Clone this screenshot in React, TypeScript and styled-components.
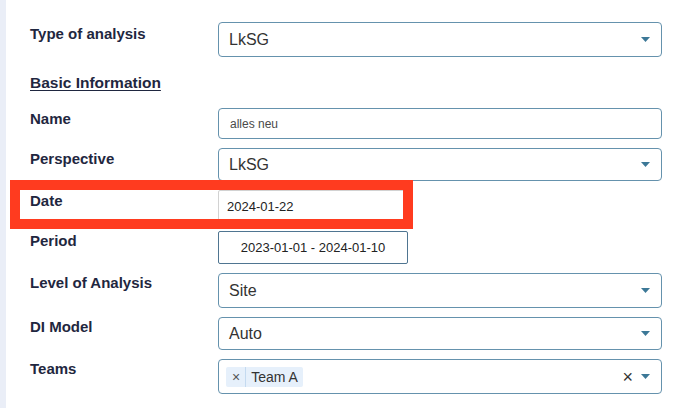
import React from "react";
import styled, { createGlobalStyle } from "styled-components";

const GlobalStyle = createGlobalStyle`
  html, body { margin: 0; padding: 0; background: #ffffff; }
  body { font-family: "Liberation Sans", Arial, Helvetica, sans-serif; }
  * { box-sizing: border-box; }
`;

const Page = styled.div`
  display: flex;
  width: 688px;
  height: 408px;
  overflow: hidden;
  background: #ffffff;
`;

const SideStrip = styled.div`
  width: 6px;
  flex: 0 0 6px;
  background: #eaeef7;
`;

const Form = styled.div`
  display: flex;
  flex-direction: column;
  gap: 9px;
  padding: 22px 0 0 24px;
`;

const Row = styled.div<{ $h: number }>`
  position: relative;
  display: grid;
  grid-template-columns: 188px 444px;
  height: ${(p) => p.$h}px;
`;

const Label = styled.div<{ $top?: number }>`
  padding-top: ${(p) => (p.$top ?? 2)}px;
  font-size: 15px;
  line-height: 18px;
  font-weight: 700;
  color: #1f2740;
`;

const SectionTitle = styled.div`
  margin: 7px 0 6px;
  font-size: 15.5px;
  line-height: 20px;
  font-weight: 700;
  color: #1f2740;
  text-decoration: underline;
  text-underline-offset: 2px;
`;

const SelectBox = styled.div`
  display: flex;
  align-items: center;
  height: 100%;
  padding: 0 11px 0 10px;
  border: 1px solid #6592ad;
  border-radius: 4px;
  font-size: 16px;
  color: #333333;
  background: #fff;
`;

const SelectValue = styled.span`
  flex: 1;
`;

const TextInput = styled.div`
  display: flex;
  align-items: center;
  height: 100%;
  padding: 0 11px;
  border: 1px solid #6592ad;
  border-radius: 4px;
  font-size: 12px;
  color: #4a4a4a;
`;

const DateInput = styled.div`
  display: flex;
  align-items: center;
  width: 190px;
  height: 100%;
  padding: 0 8px;
  border: 1px solid #d2d2d2;
  border-radius: 2px;
  font-size: 13px;
  color: #222;
`;

const PeriodInput = styled.div`
  display: flex;
  align-items: center;
  justify-content: center;
  width: 190px;
  height: 100%;
  border: 1px solid #4f7591;
  border-radius: 2px;
  font-size: 13px;
  color: #222;
`;

const Tag = styled.div`
  display: flex;
  align-items: stretch;
  height: 20px;
  background: #e6f0fb;
  border-radius: 2px;
  font-size: 14px;
  color: #333;
`;

const TagRemove = styled.span`
  display: flex;
  align-items: center;
  padding: 0 5px 0 6px;
  border-right: 1px solid #c4daf0;
  font-size: 14px;
  color: #555;
`;

const TagText = styled.span`
  display: flex;
  align-items: center;
  padding: 0 5px 0 5px;
`;

const TagArea = styled.div`
  flex: 1;
  display: flex;
  margin-left: -3px;
`;

const ClearX = styled.span`
  font-size: 18px;
  color: #333;
  margin-right: 8px;
  line-height: 1;
`;

const Highlight = styled.div`
  position: absolute;
  left: -20px;
  top: -10px;
  width: 403px;
  height: 49px;
  border: 10px solid #ff3b1f;
  pointer-events: none;
`;

const Arrow = () => (
  <svg width="9" height="5" viewBox="0 0 9 5" style={{ display: "block" }}>
    <path d="M0 0 L9 0 L4.5 5 Z" fill="#3c7897" />
  </svg>
);

const Select = ({ value }: { value: string }) => (
  <SelectBox>
    <SelectValue>{value}</SelectValue>
    <Arrow />
  </SelectBox>
);

export default function App() {
  return (
    <>
      <GlobalStyle />
      <Page>
        <SideStrip />
        <Form>
          <Row $h={35}>
            <Label $top={3}>Type of analysis</Label>
            <Select value="LkSG" />
          </Row>
          <SectionTitle>Basic Information</SectionTitle>
          <Row $h={31}>
            <Label $top={2}>Name</Label>
            <TextInput>alles neu</TextInput>
          </Row>
          <Row $h={33}>
            <Label>Perspective</Label>
            <Select value="LkSG" />
          </Row>
          <Row $h={32}>
            <Label>Date</Label>
            <DateInput>2024-01-22</DateInput>
            <Highlight />
          </Row>
          <Row $h={33}>
            <Label $top={1}>Period</Label>
            <PeriodInput>2023-01-01 - 2024-01-10</PeriodInput>
          </Row>
          <Row $h={35}>
            <Label $top={1}>Level of Analysis</Label>
            <Select value="Site" />
          </Row>
          <Row $h={33}>
            <Label $top={1}>DI Model</Label>
            <Select value="Auto" />
          </Row>
          <Row $h={35}>
            <Label $top={1}>Teams</Label>
            <SelectBox>
              <TagArea>
                <Tag>
                  <TagRemove>×</TagRemove>
                  <TagText>Team A</TagText>
                </Tag>
              </TagArea>
              <ClearX>×</ClearX>
              <Arrow />
            </SelectBox>
          </Row>
        </Form>
      </Page>
    </>
  );
}
